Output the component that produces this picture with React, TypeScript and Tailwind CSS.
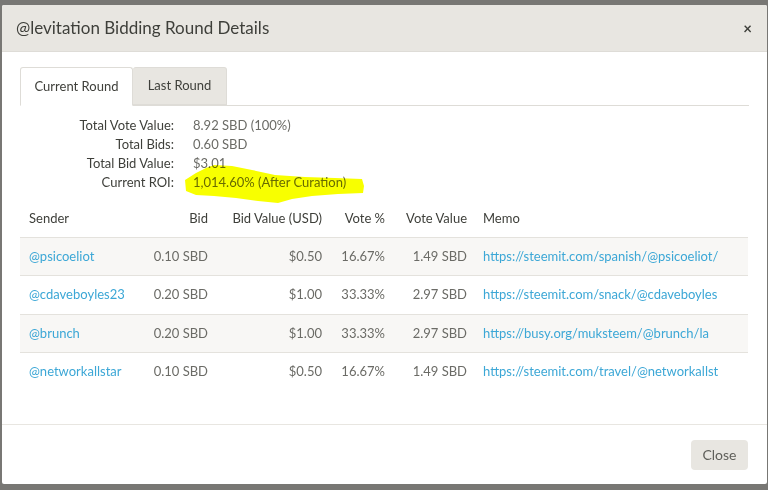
import React from "react";

// ----------------------
// Data
// ----------------------
const summary = [
  { label: "Total Vote Value:", value: "8.92 SBD (100%)" },
  { label: "Total Bids:", value: "0.60 SBD" },
  { label: "Total Bid Value:", value: "$3.01" },
  { label: "Current ROI:", value: "1,014.60% (After Curation)" },
];

// memo links as far as the column shows them
const bids = [
  { sender: "@psicoeliot", bid: "0.10 SBD", usd: "$0.50", pct: "16.67%", vote: "1.49 SBD", memo: "https://steemit.com/spanish/@psicoeliot/" },
  { sender: "@cdaveboyles23", bid: "0.20 SBD", usd: "$1.00", pct: "33.33%", vote: "2.97 SBD", memo: "https://steemit.com/snack/@cdaveboyles" },
  { sender: "@brunch", bid: "0.20 SBD", usd: "$1.00", pct: "33.33%", vote: "2.97 SBD", memo: "https://busy.org/muksteem/@brunch/la" },
  { sender: "@networkallstar", bid: "0.10 SBD", usd: "$0.50", pct: "16.67%", vote: "1.49 SBD", memo: "https://steemit.com/travel/@networkallst" },
];

// ----------------------
// Pieces
// ----------------------
const Tabs = () => (
  <div className="flex h-[39px] border-b border-[#dedcd7]">
    <div className="w-[113px] flex items-center justify-center bg-white border border-[#dedcd7] border-b-white rounded-t-[3px] -mb-px text-[13px] text-[#3e3f3a]">
      Current Round
    </div>
    <div className="w-[94px] flex items-center justify-center bg-[#e8e6e1] border border-l-0 border-[#dedcd7] rounded-t-[3px] text-[13px] text-[#3e3f3a]">
      Last Round
    </div>
  </div>
);

const Summary = () => (
  <div className="mt-[10px] grid grid-cols-[154px_1fr] gap-x-[19px] text-[13px] leading-[19px]">
    {summary.map((s) => (
      <React.Fragment key={s.label}>
        <div className="text-right text-[#3e3f3a]">{s.label}</div>
        <div className="text-[#6b6b66]">{s.value}</div>
      </React.Fragment>
    ))}
  </div>
);

const BidTable = () => (
  <table className="mt-[8px] w-[728px] table-fixed border-collapse text-[13px]">
    <colgroup>
      <col className="w-[120px]" />
      <col className="w-[76px]" />
      <col className="w-[114px]" />
      <col className="w-[63px]" />
      <col className="w-[82px]" />
      <col className="w-[273px]" />
    </colgroup>
    <thead>
      <tr className="h-[37px] text-[#3e3f3a]">
        <th className="px-[9px] text-left font-normal">Sender</th>
        <th className="px-[8px] text-right font-normal">Bid</th>
        <th className="px-[8px] text-right font-normal">Bid Value (USD)</th>
        <th className="px-[8px] text-right font-normal">Vote %</th>
        <th className="px-[8px] text-right font-normal">Vote Value</th>
        <th className="px-[8px] text-left font-normal">Memo</th>
      </tr>
    </thead>
    <tbody>
      {bids.map((b, i) => (
        <tr
          key={b.sender}
          className={`h-[38.5px] border-t border-[#e4e2dd] text-[#6b6b66] ${i % 2 === 0 ? "bg-[#f8f7f5]" : "bg-white"}`}
        >
          <td className="px-[9px] text-[#3ca7d6] whitespace-nowrap">{b.sender}</td>
          <td className="px-[8px] text-right whitespace-nowrap">{b.bid}</td>
          <td className="px-[8px] text-right">{b.usd}</td>
          <td className="px-[8px] text-right">{b.pct}</td>
          <td className="px-[8px] text-right whitespace-nowrap">{b.vote}</td>
          <td className="pl-[8px] whitespace-nowrap text-[#3ca7d6]">{b.memo}</td>
        </tr>
      ))}
    </tbody>
  </table>
);

// freehand marker over the ROI line
const Highlight = () => (
  <svg className="absolute left-0 top-0 pointer-events-none mix-blend-multiply" width="768" height="490">
    <path
      d="M185 180 L196 173 L206 168 L214 165 L232 166 L252 170 L275 175 L305 177 L335 178 L362 179 L364 186 L363 193 L338 194 L312 196 L292 199 L278 203 L258 201 L236 198 L214 196 L196 195 L186 191 Z"
      fill="#f8ff00"
    />
  </svg>
);

// ----------------------
// App
// ----------------------
export default function App() {
  return (
    <div
      className="relative w-[768px] h-[490px] overflow-hidden bg-[#787774] pt-[5px] pl-[2px]"
      style={{ fontFamily: "Lato, 'Open Sans', sans-serif" }}
    >
      <div className="w-[765px] h-[479px] bg-white flex flex-col rounded-[2px] overflow-hidden">
        {/* Header */}
        <div className="h-[47px] shrink-0 bg-[#e8e6e1] border-b border-[#dedcd7] flex items-center justify-between pl-[14px] pr-[15px]">
          <h1 className="text-[17px] text-[#3e3f3a]">@levitation Bidding Round Details</h1>
          <span className="text-[15px] font-bold text-[#3e3f3a] leading-none">×</span>
        </div>

        {/* Body */}
        <div className="flex-1 px-[18px] pt-[15px]">
          <Tabs />
          <Summary />
          <BidTable />
        </div>

        {/* Footer */}
        <div className="h-[60px] shrink-0 border-t border-[#e8e6e1] flex items-center justify-end pr-[19px]">
          <button className="h-[30px] w-[57px] rounded-[4px] bg-[#e8e6e1] text-[14px] text-[#5f5f5a]">Close</button>
        </div>
      </div>
      <Highlight />
    </div>
  );
}
